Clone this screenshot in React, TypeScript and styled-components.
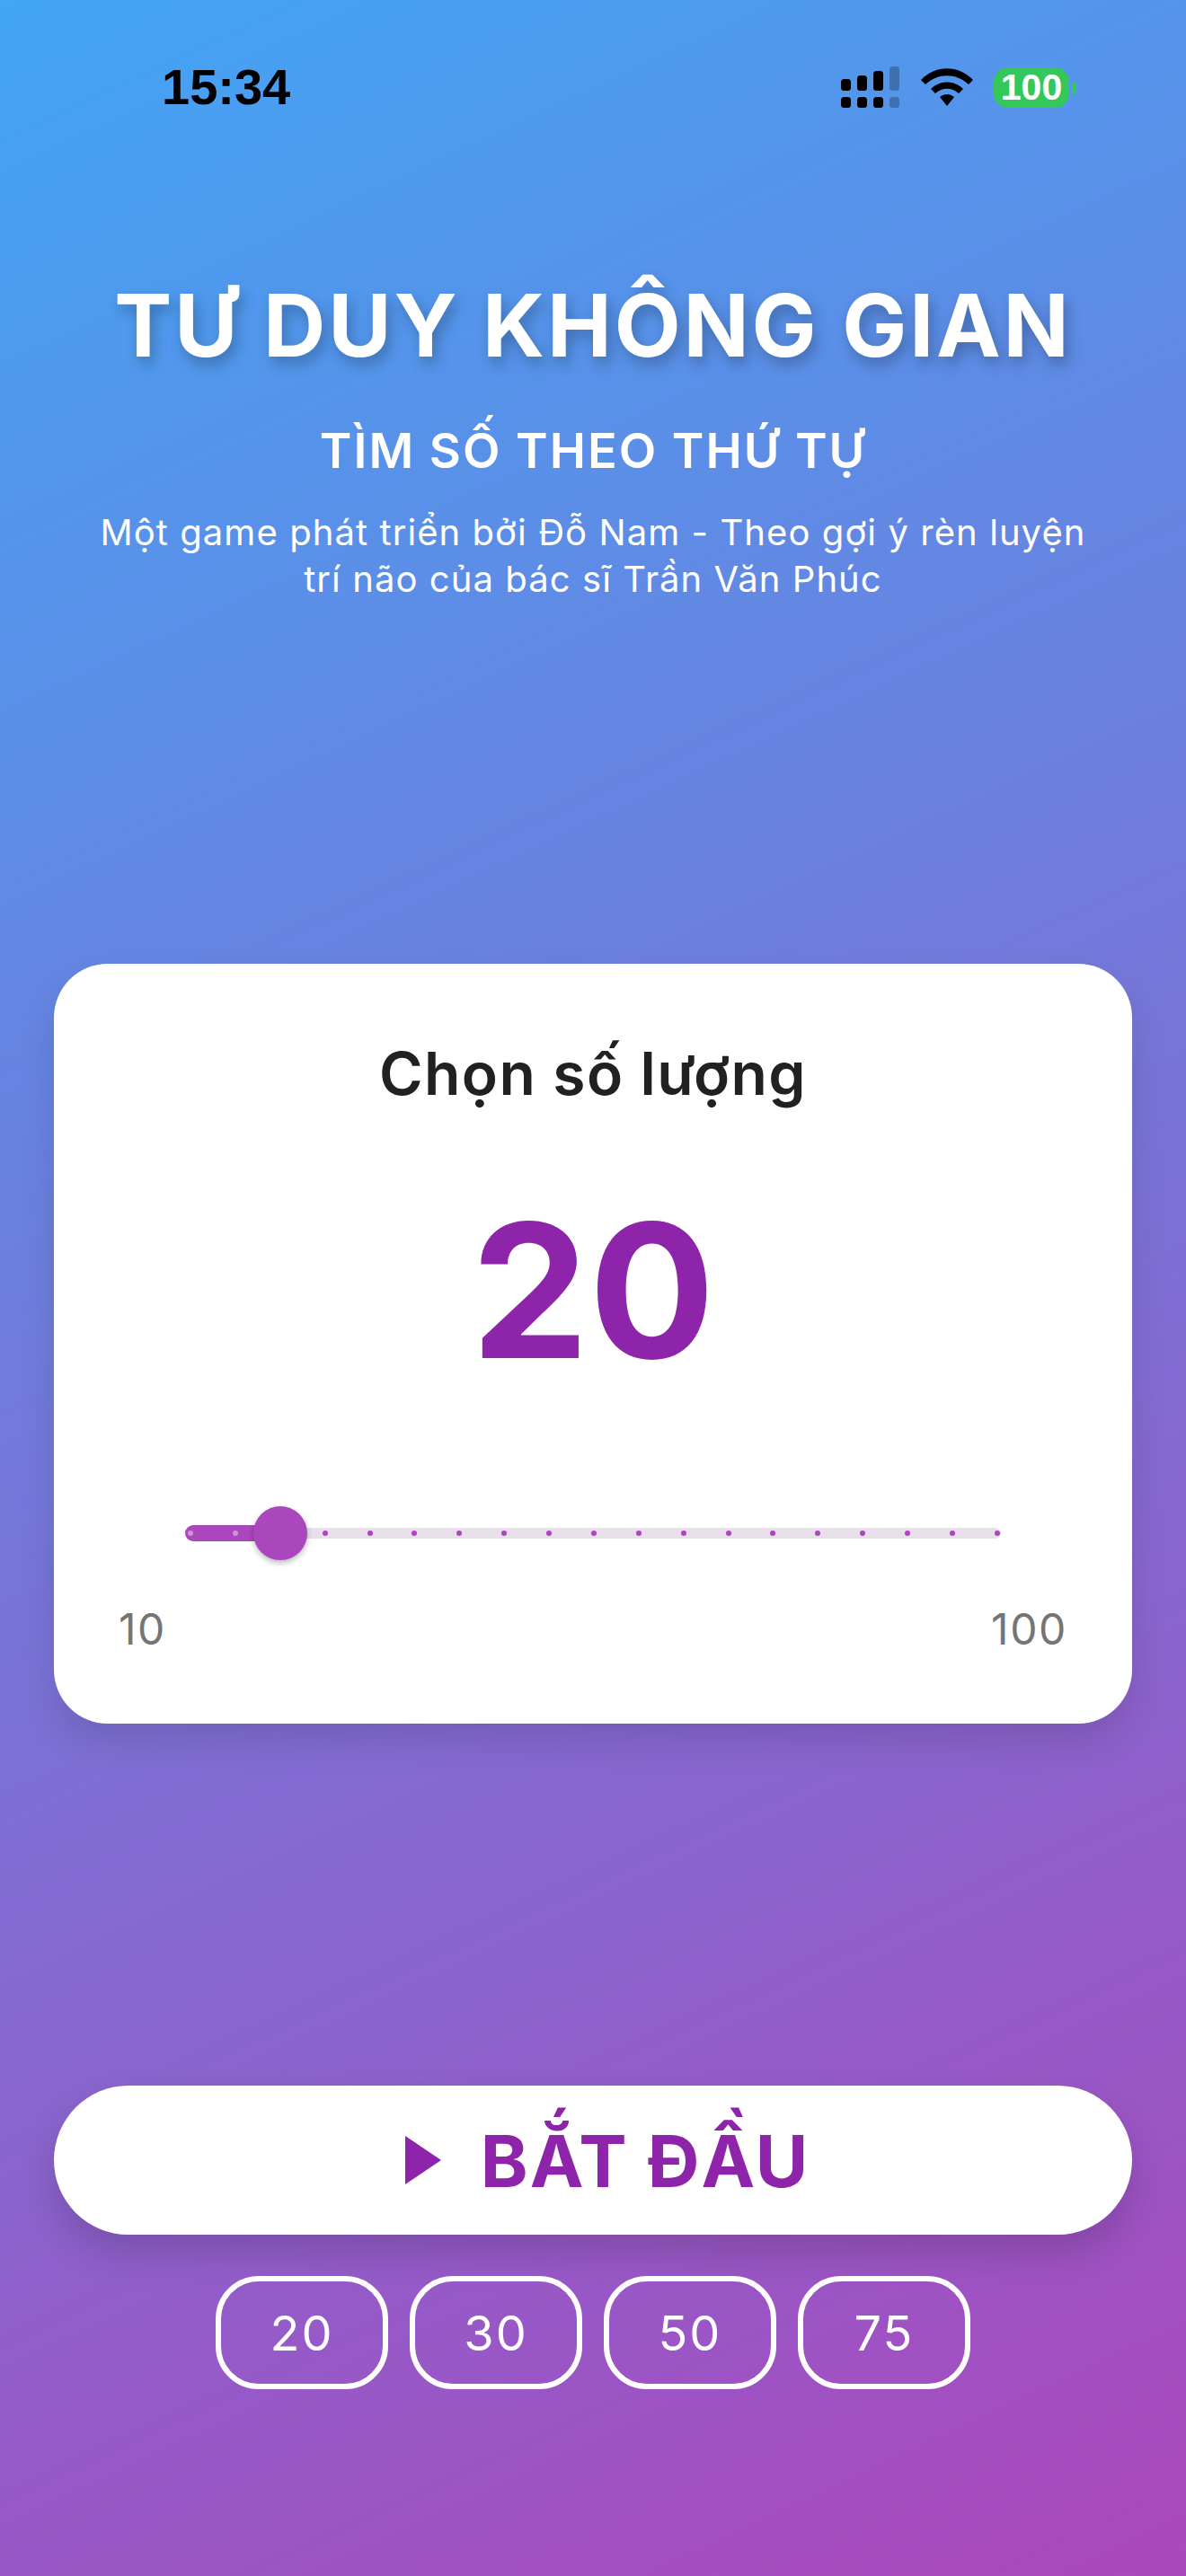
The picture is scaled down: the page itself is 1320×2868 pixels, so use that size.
import React from "react";
import styled, { createGlobalStyle } from "styled-components";

const GlobalStyle = createGlobalStyle`
  html, body {
    margin: 0;
    padding: 0;
  }
  * {
    box-sizing: border-box;
  }
`;

const Screen = styled.div`
  width: 1320px;
  height: 2868px;
  display: flex;
  flex-direction: column;
  background: linear-gradient(155deg, #42a5f5 0%, #ab47bc 100%);
  font-family: Inter, "Noto Sans", sans-serif;
  overflow: hidden;
`;

const StatusBar = styled.div`
  height: 176px;
  padding: 74px 130px 0 180px;
  display: flex;
  justify-content: space-between;
  align-items: flex-start;
`;

const Time = styled.span`
  font-family: "Liberation Sans", Arial, sans-serif;
  font-size: 56px;
  font-weight: 700;
  line-height: 46px;
  color: #000;
`;

const StatusIcons = styled.div`
  display: flex;
  align-items: center;
  gap: 23px;
`;

const Battery = styled.div`
  position: relative;
  width: 84px;
  height: 45px;
  border-radius: 16px;
  background: #34c759;
  color: #fff;
  font-family: "Liberation Sans", Arial, sans-serif;
  font-size: 41px;
  font-weight: 700;
  display: flex;
  align-items: center;
  justify-content: center;

  &::after {
    content: "";
    position: absolute;
    right: -8px;
    top: 16px;
    width: 5px;
    height: 14px;
    border-radius: 0 4px 4px 0;
    background: #34c759;
  }
`;

const Header = styled.header`
  display: flex;
  flex-direction: column;
  align-items: center;
  color: #fff;
  text-align: center;
  height: 897px;
`;

const Title = styled.h1`
  margin: 128px 0 0;
  font-size: 96px;
  line-height: 116px;
  font-weight: 700;
  letter-spacing: 2.9px;
  white-space: nowrap;
  text-shadow: 4px 8px 16px rgba(0, 0, 0, 0.26);
`;

const Subtitle = styled.h2`
  margin: 50px 0 0;
  font-size: 54px;
  line-height: 64px;
  font-weight: 600;
  letter-spacing: 2px;
`;

const Description = styled.p`
  margin: 33px 0 0;
  font-size: 40px;
  line-height: 52px;
  font-weight: 400;
  letter-spacing: 1.07px;
`;

const Card = styled.section`
  margin: 0 60px;
  height: 846px;
  padding: 84px 72px 0;
  background: #fff;
  border-radius: 60px;
  box-shadow: 0 20px 40px rgba(0, 0, 0, 0.12);
  display: flex;
  flex-direction: column;
  align-items: center;
`;

const CardTitle = styled.h3`
  margin: 0;
  font-size: 66px;
  line-height: 76px;
  font-weight: 600;
  letter-spacing: 1.4px;
  color: #212121;
`;

const Count = styled.div`
  margin-top: 79px;
  font-size: 208px;
  line-height: 248px;
  font-weight: 700;
  color: #8e24aa;
`;

const Slider = styled.div`
  position: relative;
  width: 908px;
  height: 60px;
  margin-top: 117px;
  display: flex;
  align-items: center;
`;

const ActiveTrack = styled.div`
  width: 106px;
  height: 18px;
  border-radius: 9px 0 0 9px;
  background: #ab47bc;
`;

const InactiveTrack = styled.div`
  flex: 1;
  height: 12px;
  border-radius: 0 6px 6px 0;
  background: #e8dfea;
`;

const Ticks = styled.div`
  position: absolute;
  left: 3px;
  right: 1px;
  top: 27px;
  display: flex;
  justify-content: space-between;
`;

const Tick = styled.span<{ $active: boolean }>`
  width: 6px;
  height: 6px;
  border-radius: 50%;
  background: ${(p) => (p.$active ? "#cf93da" : "#ab47bc")};
`;

const Thumb = styled.div`
  position: absolute;
  left: 76px;
  top: 0;
  width: 60px;
  height: 60px;
  border-radius: 50%;
  background: #ab47bc;
  box-shadow: 0 3px 6px rgba(0, 0, 0, 0.28);
`;

const RangeLabels = styled.div`
  align-self: stretch;
  margin-top: 50px;
  display: flex;
  justify-content: space-between;
  font-size: 48px;
  line-height: 54px;
  letter-spacing: 1.6px;
  color: #757575;
`;

const Actions = styled.div`
  margin-top: 403px;
  padding: 0 60px;
  display: flex;
  flex-direction: column;
  align-items: center;
`;

const StartButton = styled.button`
  width: 100%;
  height: 166px;
  padding: 0 0 0 32px;
  border: none;
  border-radius: 83px;
  background: #fff;
  color: #8e24aa;
  box-shadow: 0 20px 40px rgba(0, 0, 0, 0.16);
  font-family: inherit;
  font-size: 80px;
  font-weight: 700;
  letter-spacing: 2px;
  display: flex;
  align-items: center;
  justify-content: center;
  gap: 44px;
`;

const Presets = styled.div`
  margin-top: 46px;
  display: flex;
  gap: 24px;
`;

const Preset = styled.button`
  width: 192px;
  height: 126px;
  border: 6px solid #fff;
  border-radius: 48px;
  background: transparent;
  color: #fff;
  font-family: inherit;
  font-size: 54px;
  font-weight: 400;
  letter-spacing: 2px;
`;

const SignalIcon = () => (
  <svg width="66" height="46" viewBox="0 0 66 46">
    <rect x="0" y="14" width="11" height="13" rx="3.5" />
    <rect x="18" y="10" width="11" height="17" rx="3.5" />
    <rect x="36" y="5" width="11" height="22" rx="3.5" />
    <rect x="54" y="0" width="11" height="27" rx="3.5" opacity="0.25" />
    <rect x="0" y="34" width="11" height="12" rx="3.5" />
    <rect x="18" y="34" width="11" height="12" rx="3.5" />
    <rect x="36" y="34" width="11" height="12" rx="3.5" />
    <rect x="54" y="34" width="11" height="12" rx="3.5" opacity="0.25" />
  </svg>
);

const WifiIcon = () => (
  <svg width="58" height="42" viewBox="0 0 58 42">
    <path d="M0 13 C16 -4 42 -4 58 13 L53 18 C39 5 19 5 5 18 Z" />
    <path d="M11 23 C21 13 37 13 47 23 L42 28 C34 21 24 21 16 28 Z" />
    <path d="M21 32 C26 28 32 28 37 32 L29 42 Z" />
  </svg>
);

const PlayIcon = () => (
  <svg width="40" height="54" viewBox="0 0 40 54" fill="currentColor">
    <path d="M0 0 L40 27 L0 54 Z" />
  </svg>
);

const TICK_COUNT = 19;
const PRESETS = [20, 30, 50, 75];

export default function App() {
  return (
    <Screen>
      <GlobalStyle />
      <StatusBar>
        <Time>15:34</Time>
        <StatusIcons>
          <SignalIcon />
          <WifiIcon />
          <Battery>100</Battery>
        </StatusIcons>
      </StatusBar>
      <Header>
        <Title>TƯ DUY KHÔNG GIAN</Title>
        <Subtitle>TÌM SỐ THEO THỨ TỰ</Subtitle>
        <Description>
          Một game phát triển bởi Đỗ Nam - Theo gợi ý rèn luyện
          <br />
          trí não của bác sĩ Trần Văn Phúc
        </Description>
      </Header>
      <Card>
        <CardTitle>Chọn số lượng</CardTitle>
        <Count>20</Count>
        <Slider>
          <ActiveTrack />
          <InactiveTrack />
          <Ticks>
            {Array.from({ length: TICK_COUNT }, (_, i) => (
              <Tick key={i} $active={i < 2} />
            ))}
          </Ticks>
          <Thumb />
        </Slider>
        <RangeLabels>
          <span>10</span>
          <span>100</span>
        </RangeLabels>
      </Card>
      <Actions>
        <StartButton>
          <PlayIcon />
          BẮT ĐẦU
        </StartButton>
        <Presets>
          {PRESETS.map((n) => (
            <Preset key={n}>{n}</Preset>
          ))}
        </Presets>
      </Actions>
    </Screen>
  );
}
